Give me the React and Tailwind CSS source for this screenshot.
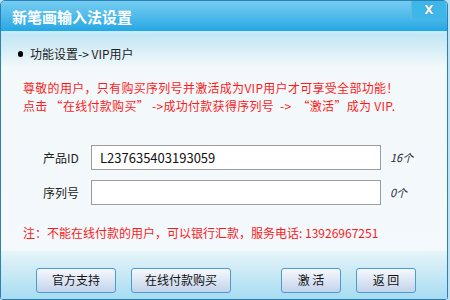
export default function App() {
  const font = { fontFamily: '"Noto Sans CJK SC", "Noto Sans", sans-serif' };
  return (
    <div className="w-[450px] h-[300px] bg-[#bfe3f3] overflow-hidden" style={font}>
      <div className="w-[448px] h-[300px] border border-[#2d7fb5] rounded-t-[5px] rounded-b-[3px] overflow-hidden flex flex-col">
        {/* title bar */}
        <div className="h-[30px] shrink-0 flex items-center justify-between bg-gradient-to-b from-[#74cdf1] to-[#1fa7e4]">
          <span className="pl-[11px] text-white font-bold text-[15px] leading-none">新笔画输入法设置</span>
          <div className="self-start h-[18px] w-[35px] mr-[1px] border-l border-[#62bbe4] flex items-center justify-center bg-[#3db6ea]">
            <span className="text-[#f2fafd] font-bold text-[12px] leading-none [text-shadow:0_0_1px_#5d7d8d,0_0_1px_#5d7d8d]" style={{ fontFamily: '"DejaVu Sans", sans-serif' }}>X</span>
          </div>
        </div>
        <div className="flex-1 flex flex-col bg-gradient-to-b from-[#bde4f3] via-[#f3f9fb] via-[14%] to-[#f3f9fc]">
          <div className="h-[3px] bg-[#c8eaf6]"></div>
          <div className="flex items-center pl-[17px] pt-[11px] text-[12px] text-[#222]">
            <span className="w-[5px] h-[6px] rounded-full bg-black mr-[7px]"></span>
            功能设置-&gt; VIP用户
          </div>
          <div className="pl-[22px] pt-[16px] text-[12px] leading-[18px] tracking-[0.3px] text-[#ff1a1a]">
            <p>尊敬的用户，只有购买序列号并激活成为VIP用户才可享受全部功能！</p>
            <p>点击 “在线付款购买” -&gt;成功付款获得序列号&nbsp; -&gt;&nbsp; “激活”成为 VIP.</p>
          </div>
          <div className="flex flex-col gap-[10px] pt-[30px]">
            <div className="flex items-center">
              <span className="w-[90px] pl-[42px] text-[12px] text-[#222]">产品ID</span>
              <div className="w-[290px] h-[25px] border border-[#9c9c9c] bg-white flex items-center pl-[8px] text-[13px] text-[#111]">
                L237635403193059
              </div>
              <span className="pl-[9px] text-[11px] italic text-[#2a2a40]">16个</span>
            </div>
            <div className="flex items-center">
              <span className="w-[90px] pl-[42px] text-[12px] text-[#222]">序列号</span>
              <div className="w-[290px] h-[25px] border border-[#9c9c9c] bg-white"></div>
              <span className="pl-[9px] text-[11px] italic text-[#2a2a40]">0个</span>
            </div>
          </div>
          <p className="pl-[22px] pt-[19px] text-[12px] text-[#ff1a1a]">注：不能在线付款的用户，可以银行汇款，服务电话: 13926967251</p>
          <div className="mt-auto h-[48px] flex items-center bg-gradient-to-b from-[#e6f4f9] to-[#a6dcf1] pt-[10px]">
            <Btn w="w-[80px]" ml="ml-[35px]">官方支持</Btn>
            <Btn w="w-[100px]" ml="ml-[15px]">在线付款购买</Btn>
            <Btn w="w-[60px]" ml="ml-[50px]">激 活</Btn>
            <Btn w="w-[60px]" ml="ml-[15px]">返 回</Btn>
          </div>
        </div>
      </div>
    </div>
  );
}

function Btn({ w, ml, children }) {
  return (
    <div className={`${w} ${ml} h-[25px] rounded-[3px] border border-[#4b9ad6] bg-gradient-to-b from-[#f6f9fd] to-[#c3d3ea] flex items-center justify-center text-[12px] text-[#111]`}>
      {children}
    </div>
  );
}
